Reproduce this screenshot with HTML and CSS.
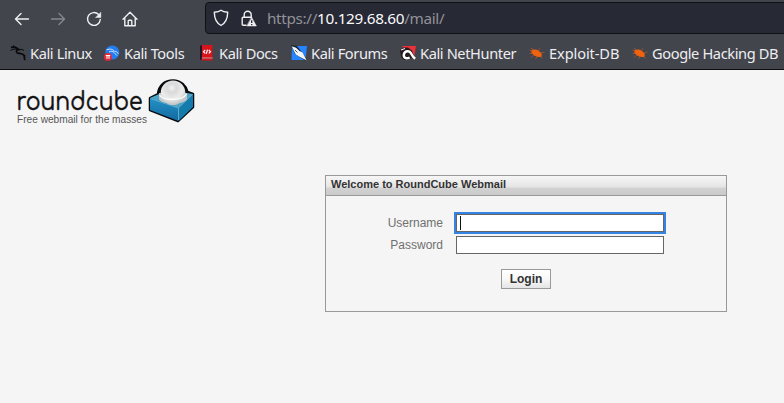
FILE: index.html
```html
<!DOCTYPE html>
<html lang="en">
<head>
<meta charset="utf-8">
<title>RoundCube Webmail</title>
<link rel="stylesheet" href="styles.css">
</head>
<body>
<header class="chrome">
  <div class="toolbar">
    <nav class="nav-buttons">
      <svg width="16" height="16" viewBox="0 0 16 16" class="icon"><path d="M14.500 8H1.600M7 2.500 1.500 8 7 13.500"/></svg>
      <svg width="16" height="16" viewBox="0 0 16 16" class="icon disabled"><path d="M1.500 8h12.900M9 2.500 14.500 8 9 13.500"/></svg>
      <svg width="16" height="16" viewBox="0 0 16 16" class="icon"><path d="M14.300 8.500A6.400 6.400 0 1 1 12.600 3.600"/><path class="solid" d="M14.800 1.500v5H9.800z"/></svg>
      <svg width="16" height="16" viewBox="0 0 16 16" class="icon"><path d="M1 8.300 8 1.300l7 7M2.800 7v7.700h10.400V7M6.200 14.500V10q0-.8.800-.8h2q.8 0 .8.800v4.500"/></svg>
    </nav>
    <div class="urlbar">
      <svg width="16" height="18" viewBox="0 0 16 18" class="icon shield"><path d="M8 1.200C6 2.600 3.800 3 1.300 3.300 1.400 9.200 2.800 13.800 8 16.500c5.200-2.700 6.600-7.300 6.700-13.200C12.200 3 10 2.600 8 1.200z"/></svg>
      <svg width="16" height="17" viewBox="0 0 16 17" class="icon lock"><path d="M3.200 7V4.800a3.500 3.500 0 0 1 7 0V7M5 15.300H2.200q-1 0-1-1V8.200q0-1 1-1h8.300"/><path class="solid" d="m10.700 7.500 4.700 8.500H6z"/><path class="mark" d="M10.700 10.200v2.900m0 .9v1.200"/></svg>
      <div class="url">https://<span class="host">10.129.68.60</span>/mail/</div>
    </div>
  </div>
  <nav class="bookmarks">
    <a class="bm linux"><svg width="16" height="16" viewBox="0 0 16 16"><g fill="none" stroke="#090a0b"><path stroke-width="1.700" d="M1 2.400c3-.8 5.800-.2 7.700 2-2 .5-3.200 2.100-1.600 3.300 1.400 1 5 .1 6.600 2.300.9 1.300.8 3 1 5.300"/><path d="M.5 5.500c2.500-1.600 4.800-1.800 7-1M3 .5l4.500 3M9 5l3-.8 2 1.500M13 10.500l2.500.3"/></g></svg><span>Kali Linux</span></a>
    <a class="bm tools"><svg width="16" height="16" viewBox="0 0 16 16"><circle cx="8.300" cy="7.500" r="7" fill="#247cf1"/><path fill="none" stroke="#d7e8ff" stroke-width="1" d="M2.500 4.800c4-1.500 6.500-.3 8 1.500 2 .1 3 .8 3.800 2.500M5 7c2.600-1.200 3.500-1 5 .5 1 1.500 2 1.500 3 3"/><circle cx="3.900" cy="11.900" r="3.900" fill="#e52835"/><path fill="none" stroke="#fff" stroke-width="1.100" d="M1.800 10.500h4.400M3 10.500v3.300m2-3.300v3.300"/></svg><span>Kali Tools</span></a>
    <a class="bm docs"><svg width="16" height="16" viewBox="0 0 16 16"><path fill="#d5141b" d="M2.500 0H13.500v13H2.500z"/><path fill="#21142b" d="M1 .5h2v14.500H1z"/><path fill="#f1eee9" d="M3 12.700h10.500v.8H3z"/><path fill="#d5141b" d="M2.500 13.500h11v2h-11z"/><path fill="none" stroke="#fff" stroke-width="1.200" d="M6.200 5 4.500 6.700l1.700 1.700M9.800 5l1.700 1.700-1.700 1.700M8.500 4.700 7.300 8.900"/></svg><span>Kali Docs</span></a>
    <a class="bm forums"><svg width="16" height="16" viewBox="0 0 16 16"><path fill="#2584ff" d="M1 1h15L14.500 15H.5z"/><path fill="#192432" d="m0 0 6 1 10 13-1 2L4 9z"/><path fill="#f4f5f7" d="m.8 1.300 4.200 1.500L8.500 6 11.500 7.500l4.300 8L9 12 4.800 9.600 3 6z"/><path stroke="#263348" stroke-width=".8" d="m4 5 2.500 2.500"/></svg><span>Kali Forums</span></a>
    <a class="bm nethunter"><svg width="16" height="16" viewBox="0 0 16 16"><path fill="#ee3037" d="M2 1h14l-2 11.500L8 7z"/><path fill="#24191e" d="M0 5 4 2.500h4l4 3 3.500 9.500-4-2L8 15H4L1 12z"/><path fill="none" stroke="#fff" stroke-width="2.500" d="M9.700 12.500c-4 2-6.700-.1-5.700-3.600 1.200-3.300 5.200-3.500 6.900-.8 1.100 2.100 1.900 4 4.300 5.700"/><path stroke="#fff" d="m1 5 4-1.500"/></svg><span>Kali NetHunter</span></a>
    <a class="bm exploit"><svg width="16" height="16" viewBox="0 0 16 16"><g id="bug"><path fill="#f0620d" d="M2.500 6c.5-1.300 1.700-1.900 3-1.300C8.800 4 10.700 6.500 12.800 9l-.3 2.800c-3.500.8-8-.5-9-3C2.300 8 2 7 2.500 6z"/><path fill="none" stroke="#b85c30" stroke-width=".7" d="M3.500 6 .5 5.200M4 8.500H.7m4 1.500L2 12.700M8 11.500 6.500 14M9 5.500l2.300-2.200M12 8l3.500-1M11.500 11.500l2 2M4 5 2 3"/></g></svg><span>Exploit-DB</span></a>
    <a class="bm google"><svg width="16" height="16" viewBox="0 0 16 16"><use href="#bug"/></svg><span>Google Hacking DB</span></a>
  </nav>
</header>
<main class="page">
  <svg class="logo" width="180" height="50" viewBox="0 0 180 50">
    <defs>
      <radialGradient id="ball" cx=".45" cy=".3" r=".75"><stop offset="0" stop-color="#f2f2f2"/><stop offset=".25" stop-color="#d9d9d9"/><stop offset=".6" stop-color="#ececec"/><stop offset="1" stop-color="#b4b8ba"/></radialGradient>
      <linearGradient id="side" x2="0" y2="1"><stop stop-color="#2492c6"/><stop offset="1" stop-color="#1269a0"/></linearGradient>
    </defs>
    <text class="wordmark" x="-.5" y="32" textLength="126" lengthAdjust="spacingAndGlyphs">roundcube</text>
    <text class="tagline" x="0" y="45" textLength="130" lengthAdjust="spacingAndGlyphs">Free webmail for the masses</text>
    <path fill="#080b0d" stroke="#080b0d" stroke-width="2.500" stroke-linejoin="round" d="m133 20 8-4C142 7 148 2.500 156 2.500S169 8 170.500 14l5.500 2v13L161 43l-28-11z"/>
    <path fill="#4ba5ca" d="m133 20 18-8 25 4-14.500 14z"/>
    <path fill="url(#side)" d="m133 20 28.500 10V43L133 32z"/>
    <path fill="#147bad" d="M161.500 30 176 16v13L161.500 43z"/>
    <path fill="none" stroke="#75bdd8" stroke-width=".8" d="m133.500 20.500 28 9.500 14-13.500m-14 13.500v12"/>
    <path fill="#c3c9cb" d="M142 15h28v6c-2 6-26 6-28 0z"/>
    <circle cx="156" cy="14.800" r="12.300" fill="url(#ball)"/>
    <path fill="none" stroke="#fff" stroke-width="1.200" d="M142.500 17c3 6 23 6 27-1"/>
  </svg>
  <form class="login-box">
    <h1 class="box-title">Welcome to RoundCube Webmail</h1>
    <div class="fields">
      <label class="label" for="user">Username</label>
      <div class="field focused" id="user"><span class="caret"></span></div>
      <label class="label" for="pass">Password</label>
      <div class="field" id="pass"></div>
    </div>
    <button class="login" type="button">Login</button>
  </form>
</main>
</body>
</html>
```
FILE: styles.css
```css
* { box-sizing: border-box; }
body {
  margin: 0;
  height: 403px;
  overflow: hidden;
  background: #f5f5f5;
  font-family: "Liberation Sans", sans-serif;
}
.chrome {
  height: 70px;
  background: #43454d;
  border-bottom: 1px solid #0c0c0f;
  font-family: "Noto Sans", sans-serif;
  overflow: hidden;
}
.toolbar { display: flex; height: 36px; padding-top: 2px; }
.nav-buttons { display: flex; gap: 20px; width: 205px; padding: 9px 0 0 14px; flex: none; }
.icon { display: block; flex: none; fill: none; stroke: #f0f0f2; stroke-width: 1.4; stroke-linecap: round; stroke-linejoin: round; }
.disabled { stroke: #85868b; }
.icon .solid { fill: #f0f0f2; stroke-width: 0.5; }
.icon .mark { stroke: #262833; stroke-width: 1.3; stroke-linecap: butt; }
.urlbar {
  display: flex;
  align-items: center;
  flex: 1 0 590px;
  height: 32px;
  padding-left: 7px;
  background: #272934;
  border: 1px solid #101116;
  border-radius: 4px;
}
.lock { margin-left: 12px; }
.url { margin-left: 10px; color: #929299; font-size: 15.3px; letter-spacing: -0.33px; line-height: 20px; white-space: nowrap; }
.host { color: #fbfbfe; }
.bookmarks { display: flex; height: 33px; padding: 1px 0 0 10px; }
.bm { display: flex; align-items: center; gap: 4px; flex: none; height: 32px; color: #eeeef0; font-size: 14.6px; letter-spacing: -0.38px; white-space: nowrap; }
.bm svg { flex: none; }
.linux { width: 94px; }
.tools { width: 95px; }
.docs { width: 92px; }
.forums { width: 109px; }
.nethunter { width: 129px; }
.exploit { width: 103px; letter-spacing: -0.1px; }
.page { height: 333px; padding: 8px 0 0 17px; }
.logo { display: block; overflow: visible; }
.wordmark { font-family: Comfortaa, Lato, sans-serif; font-size: 26px; fill: #111; stroke: #111; stroke-width: 0.5; }
.tagline { font-family: "Liberation Sans", sans-serif; font-size: 10.2px; fill: #555; }
.login-box {
  width: 402px;
  height: 137px;
  margin: 47px 0 0 308px;
  border: 1px solid #999;
}
.box-title {
  height: 20px;
  margin: 0;
  padding-left: 5px;
  border-bottom: 1px solid #999;
  background: linear-gradient(#f6f6f6 0, #e5e5e5 11px, #d2d2d2 12px, #cacaca 19px);
  color: #333;
  font-size: 11px;
  line-height: 17px;
}
.fields {
  display: grid;
  grid-template-columns: 117px 208px;
  column-gap: 13px;
  row-gap: 4px;
  padding-top: 18px;
}
.label { color: #707070; font-size: 12px; line-height: 18px; text-align: right; }
.field { height: 18px; border: 1px solid #666; background: #fff; }
.focused { padding: 1px 0 0 3px; outline: 2px solid #3584e4; }
.caret { display: block; width: 1px; height: 14px; background: #111; }
.login {
  display: block;
  width: 50px;
  height: 20px;
  margin: 15px 0 0 175px;
  padding: 0;
  border: 1px solid #999;
  background: linear-gradient(#fff, #f8f8f8 50%, #e4e4e4);
  color: #333;
  font: bold 12px "Liberation Sans", sans-serif;
}
```
